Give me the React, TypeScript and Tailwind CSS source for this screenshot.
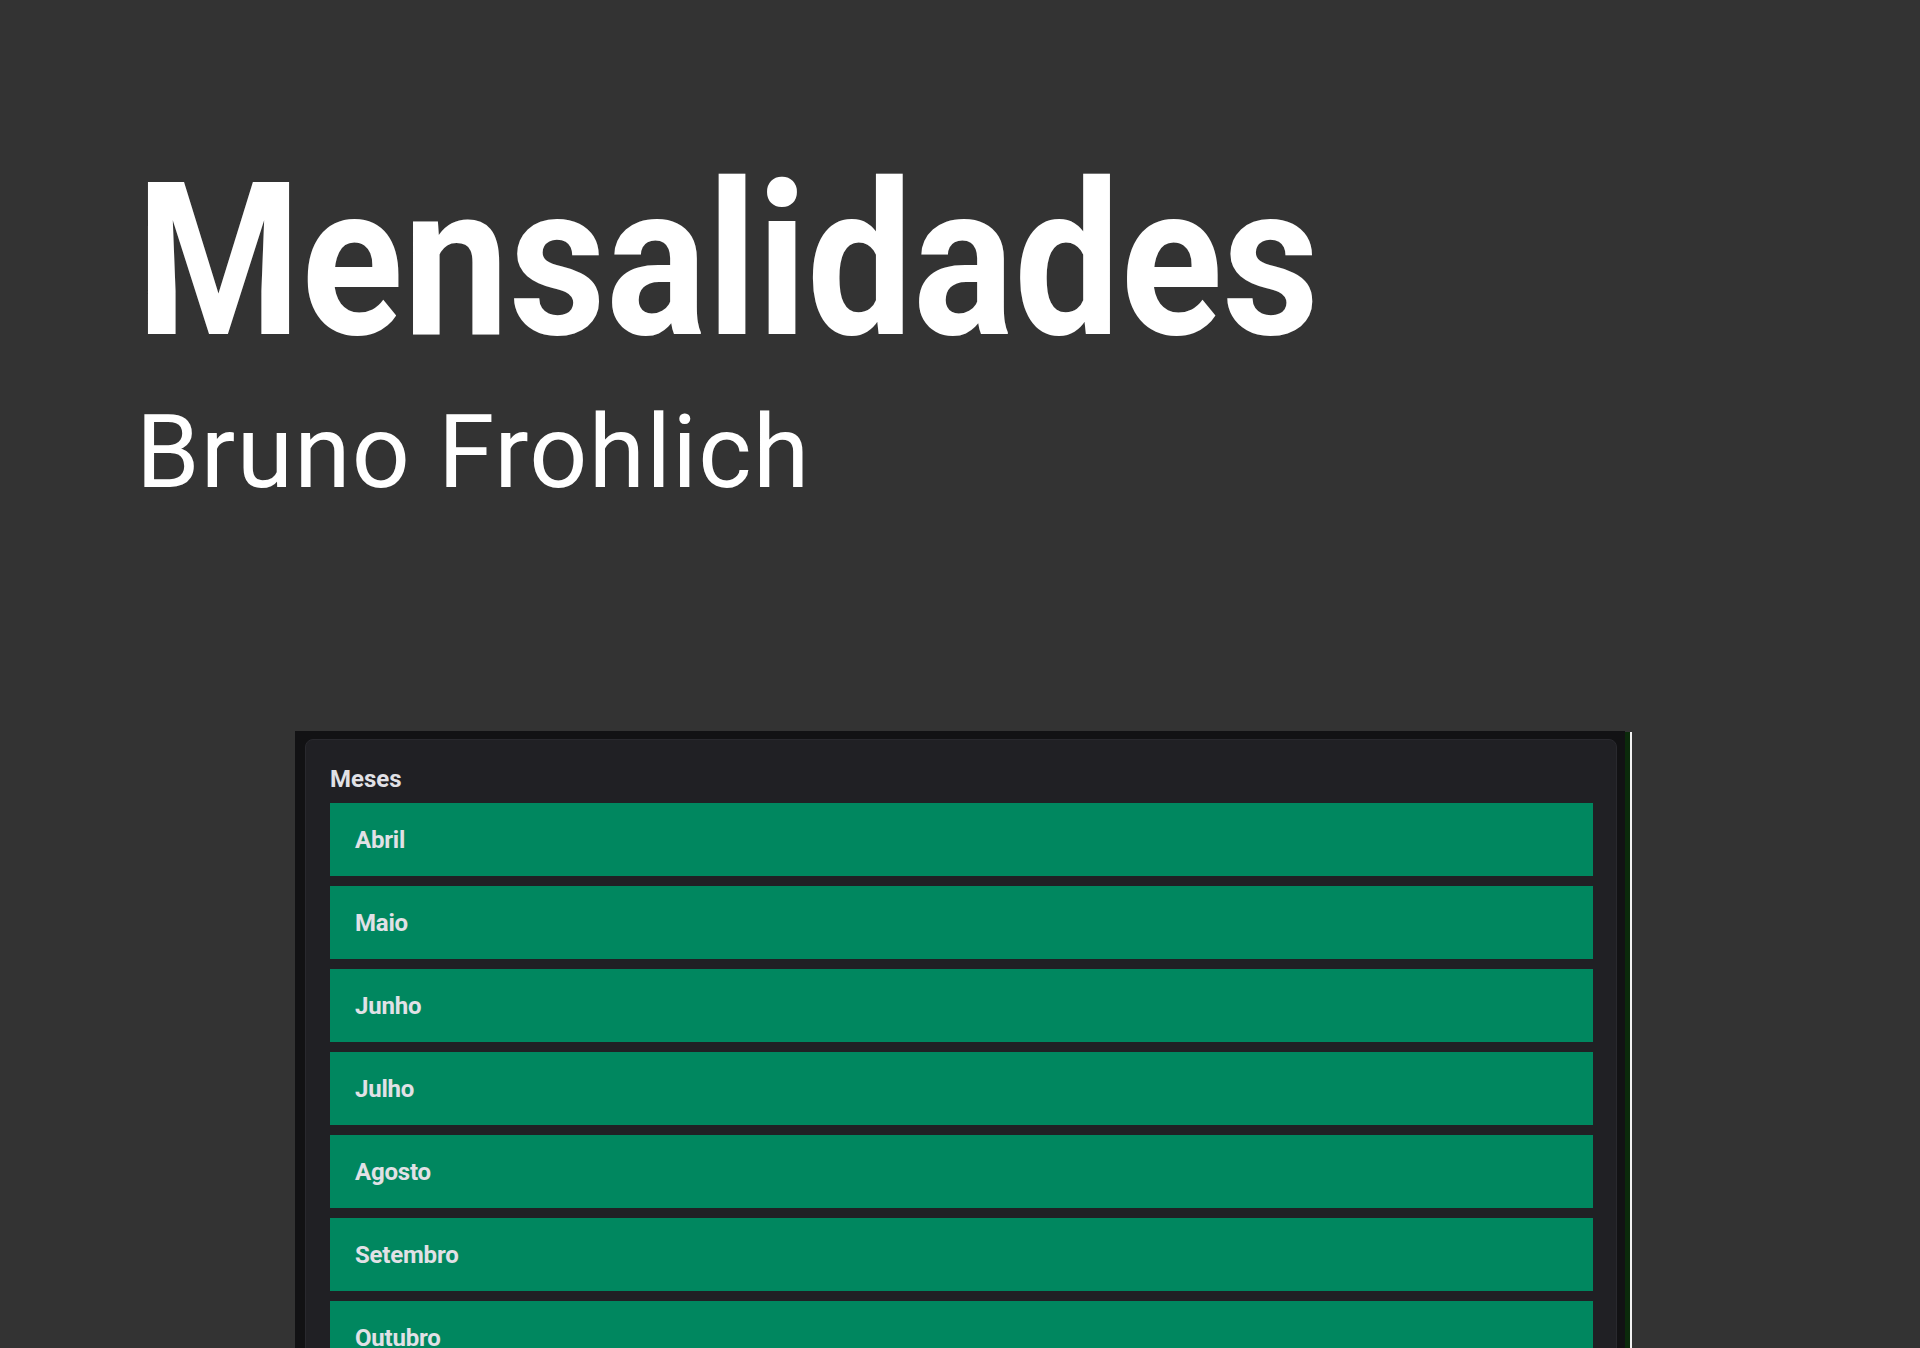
import React from 'react';

const months = ['Abril', 'Maio', 'Junho', 'Julho', 'Agosto', 'Setembro', 'Outubro', 'Novembro', 'Dezembro'];

export default function App() {
  return (
    <div className="min-h-screen bg-[#333333] font-['Roboto',sans-serif] overflow-hidden">
      {/* Header */}
      <header className="pt-[154px] pl-[136px]">
        <h1 className="text-[214px] leading-none font-bold text-white tracking-normal scale-x-[0.882] origin-left whitespace-nowrap">
          Mensalidades
        </h1>
        <p className="mt-[33px] text-[102px] leading-none font-normal tracking-[1.3px] text-white">Bruno Frohlich</p>
      </header>

      {/* Card */}
      <main className="mt-[228px] pl-[295px] flex">
        <div className="w-[1330px] bg-[#121214] pl-[10px] pr-2 pt-2">
          <div className="rounded-lg border border-[#29292e] bg-[#202024] pl-6 pr-[23px] pt-6 pb-6">
            <span className="block text-2xl leading-[30px] font-bold text-[#e1e1e6] mb-[9px]">Meses</span>
            <ul className="flex flex-col gap-[10px]">
              {months.map((m) => (
                <li
                  key={m}
                  className="h-[73px] flex items-center bg-[#00875f] pl-[25px] text-2xl font-bold tracking-[-0.2px] text-[#e1e1e6]"
                >
                  {m}
                </li>
              ))}
            </ul>
          </div>
        </div>
        <div className="w-[5px] mt-px bg-[#0b2a0b]" />
        <div className="w-[2px] mt-px bg-[#f2f2f2]" />
      </main>
    </div>
  );
}
